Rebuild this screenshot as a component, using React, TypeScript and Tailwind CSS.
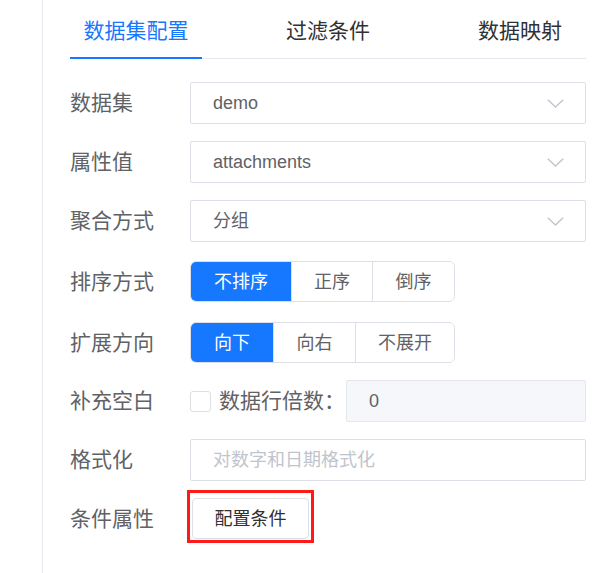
import React from "react";

const FONT = { fontFamily: '"Liberation Sans", "Noto Sans CJK SC", sans-serif' };

function Chevron() {
  return (
    <svg width="17" height="9" viewBox="0 0 17 9" fill="none">
      <path d="M0.8 0.8 L8.5 8 L16.2 0.8" stroke="#c0c4cc" strokeWidth="1.4" />
    </svg>
  );
}

function Label({ children }: { children: React.ReactNode }) {
  return <div className="w-[120px] shrink-0 text-[21px] leading-[28px] text-[#606266]">{children}</div>;
}

function Select({ value }: { value: string }) {
  return (
    <div className="flex h-[42px] flex-1 items-center justify-between rounded-[2px] border border-[#dcdfe6] bg-white pl-[22px] pr-[21px]">
      <span className="text-[18px] leading-[24px] text-[#606266]">{value}</span>
      <Chevron />
    </div>
  );
}

function Group({ items, widths, active }: { items: string[]; widths: number[]; active: number }) {
  return (
    <div className="flex h-[41px] overflow-hidden rounded-[6px] border border-[#dcdfe6]">
      {items.map((it, i) => (
        <div
          key={it}
          style={{ width: widths[i] }}
          className={
            "flex items-center justify-center text-[18px] leading-[24px] " +
            (i === active ? "bg-[#1677ff] text-white" : "bg-white text-[#606266]") +
            (i > 0 ? " border-l border-[#dcdfe6]" : "")
          }
        >
          {it}
        </div>
      ))}
    </div>
  );
}

export default function App() {
  return (
    <div className="flex h-[573px] w-[608px] overflow-hidden bg-white" style={FONT}>
      <div className="w-[42px] shrink-0" />
      <div className="w-px shrink-0 bg-[#e4e7ed]" />
      <div className="flex flex-1 flex-col pl-[27px] pr-[22px]">
        {/* tabs */}
        <div className="flex h-[59px] border-b border-[#e4e7ed]">
          <div className="relative flex w-[132px] items-start justify-center pt-[17px]">
            <span className="text-[21px] leading-[28px] text-[#1677ff]">数据集配置</span>
            <div className="absolute bottom-[-1px] left-0 right-0 h-[2px] bg-[#1677ff]" />
          </div>
          <div className="ml-[84px] pt-[17px] text-[21px] leading-[28px] text-[#303133]">过滤条件</div>
          <div className="ml-[108px] pt-[17px] text-[21px] leading-[28px] text-[#303133]">数据映射</div>
        </div>

        <div className="mt-[23px] flex items-center">
          <Label>数据集</Label>
          <Select value="demo" />
        </div>
        <div className="mt-[17px] flex items-center">
          <Label>属性值</Label>
          <Select value="attachments" />
        </div>
        <div className="mt-[17px] flex items-center">
          <Label>聚合方式</Label>
          <Select value="分组" />
        </div>
        <div className="mt-[19px] flex items-center">
          <Label>排序方式</Label>
          <Group items={["不排序", "正序", "倒序"]} widths={[100, 81, 82]} active={0} />
        </div>
        <div className="mt-[20px] flex items-center">
          <Label>扩展方向</Label>
          <Group items={["向下", "向右", "不展开"]} widths={[82, 82, 99]} active={0} />
        </div>
        <div className="mt-[17px] flex items-center">
          <Label>补充空白</Label>
          <div className="h-[21px] w-[21px] shrink-0 rounded-[3px] border border-[#dcdfe6] bg-white" />
          <span className="ml-[8px] w-[127px] shrink-0 text-[21px] leading-[28px] text-[#606266]">数据行倍数：</span>
          <div className="flex h-[42px] flex-1 items-center rounded-[2px] border border-[#e4e7ed] bg-[#f5f7fa] pl-[22px]">
            <span className="text-[18px] leading-[24px] text-[#606266]">0</span>
          </div>
        </div>
        <div className="mt-[17px] flex items-center">
          <Label>格式化</Label>
          <div className="flex h-[42px] flex-1 items-center rounded-[2px] border border-[#dcdfe6] bg-white pl-[22px]">
            <span className="text-[18px] leading-[24px] text-[#c0c4cc]">对数字和日期格式化</span>
          </div>
        </div>
        <div className="mt-[17px] flex items-center">
          <Label>条件属性</Label>
          <div className="relative ml-[2px]">
            <div className="flex h-[41px] w-[117px] items-center justify-center rounded-[4px] border border-[#dcdfe6] bg-white text-[18px] leading-[24px] text-[#303133]">
              配置条件
            </div>
            <div className="absolute left-[-5px] top-[-8px] h-[53px] w-[127px] border-[3px] border-[#ff1a1a]" />
          </div>
        </div>
      </div>
    </div>
  );
}
